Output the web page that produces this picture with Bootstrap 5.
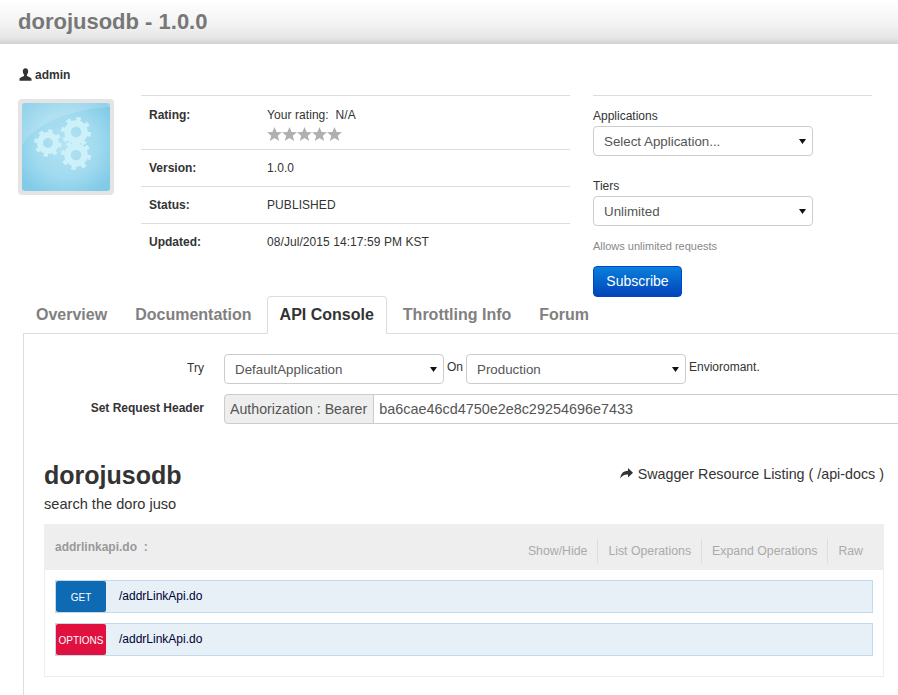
<!DOCTYPE html>
<html lang="en">
<head>
<meta charset="utf-8">
<title>dorojusodb - 1.0.0</title>
<link href="https://cdn.jsdelivr.net/npm/bootstrap@5.3.0/dist/css/bootstrap.min.css" rel="stylesheet">
<style>
html,body{overflow-x:hidden;}
body{font-family:"Liberation Sans",Arial,sans-serif;font-size:12px;color:#333;background:#fff;height:695px;overflow:hidden;}
.top-head{height:44px;background:linear-gradient(#fff 0%,#f3f3f3 55%,#e6e6e6 85%,#d2d2d2 100%);padding-left:18px;}
.top-head h1{font-size:22px;font-weight:700;color:#777;line-height:44px;margin:0;}
.owner{padding:24px 0 0 19px;height:51px;font-weight:700;color:#333;gap:3px;line-height:14px;}
.summary{padding-left:18px;height:201px;}
.thumb-box{width:96px;height:96px;margin-top:4px;background:#e4e4e4;border-radius:4px;padding:4px;flex:none;}
.thumb-box svg{display:block;border-radius:3px;}
.meta-col{width:429px;margin-left:27px;flex:none;}
.meta-tbl{border-top:1px solid #ddd;width:100%;border-collapse:collapse;}
.meta-tbl th,.meta-tbl td{padding:0 8px;vertical-align:top;font-size:12px;}
.meta-tbl tr{border-bottom:1px solid #ddd;}
.meta-tbl tr:last-child{border-bottom:0;}
.meta-tbl th{width:118px;font-weight:700;color:#333;}
.meta-tbl td{color:#333;letter-spacing:.07px;}
.r-a{height:54px;padding-top:12px!important;line-height:14px;}
.r-b{height:37px;padding-top:11px!important;line-height:14px;}
.stars{display:block;margin-top:5px;}
.sub-col{width:279px;margin-left:23px;flex:none;border-top:1px solid #ddd;}
.lbl{font-size:12px;color:#333;line-height:14px;margin:0 0 3px;}
.lbl-first{margin-top:13px;}
.lbl-next{margin-top:23px;}
.arrow-sel{font-family:"Liberation Sans",Arial,sans-serif;font-size:13.33px;color:#555;width:220px;height:30px;padding:1px 24px 0 10px;border:1px solid #ccc;border-radius:4px;line-height:27px;background-size:7px 5px;background-position:right 6px center;background-repeat:no-repeat;background-image:url("data:image/svg+xml,%3Csvg xmlns='http://www.w3.org/2000/svg' viewBox='0 0 8 6' preserveAspectRatio='none'%3E%3Cpath d='M0 0h8L4 6z' fill='%23111'/%3E%3C/svg%3E");}
.hint{font-size:11px;color:#888;line-height:14px;margin:13px 0 0;}
.sub-btn{width:89px;height:31px;margin-top:13px;padding:0;font-size:14px;line-height:29px;color:#fff;border:1px solid #04c;border-radius:4px;background:linear-gradient(#0a80dc,#0044b8);display:block;}
.tabs-wrap .nav-link{font-size:16px;font-weight:700;color:#808080;padding:8px 12px 0;height:37px;line-height:20px;margin:0;border:1px solid transparent;}
.tabs-wrap .nav-item{margin-right:2px;}
.tabs-wrap .nav-link.active{color:#333;border-color:#ddd #ddd #fff;height:38px;border-radius:4px 4px 0 0;margin-right:1px;}
.tabs-line{border-bottom:1px solid #ddd;height:38px;margin-left:23px;}
.pane{margin-left:23px;border-left:1px solid #ddd;padding:20px 0 0 0;height:361px;overflow:hidden;}
.form-line{gap:0;margin-bottom:10px;height:30px;}
.form-lbl{width:180px;text-align:right;flex:none;margin-right:20px;line-height:28px;color:#333;}
.mini{padding:0 3px;line-height:26px;color:#333;flex:none;}
.hdr-group{width:760px;flex:none;flex-wrap:nowrap;height:30px;}
.hdr-group .input-group-text{font-size:14.2px;color:#555;background:#eee;border-color:#ccc;padding:1px 6px 0 5px;height:30px;border-radius:4px 0 0 4px;}
.hdr-group .form-control{font-size:14.4px;color:#555;height:30px;padding:0 5px;border-color:#ccc;border-radius:0;}
.api-wrap{padding:0 0 0 20px;width:860px;}
.api-title{font-size:25px;font-weight:700;color:#333;line-height:30px;margin:0;}
.api-top{margin-top:36px;height:30px;}
.listing{font-size:14.3px;color:#333;line-height:20px;gap:5px;margin-bottom:3px;}
.api-desc{font-size:14.6px;color:#333;line-height:18px;margin:5px 0 11px;}
.res-box{border:1px solid #eee;height:153px;}
.res-head{background:#eee;height:46px;margin:-1px -1px 0;padding:0 11px;}
.res-name{font-weight:700;color:#999;font-size:12px;}
.res-links{gap:0;color:#aaa;font-size:12.3px;align-self:flex-end;margin-bottom:7px;}
.res-links span{padding:0 10px;line-height:24px;border-left:1px solid #ddd;}
.res-links span:first-child{border-left:0;}
.op{height:33px;margin:0 10px 10px;border:1px solid #c3d9ec;background:#e7f0f7;}
.res-ops{padding-top:10px;}
.verb{width:50px;height:31px;color:#fff;font-size:10px;text-align:center;line-height:33px;border-radius:2px;flex:none;}
.verb-get{background:#0f6ab4;}
.verb-opt{background:#e0103f;}
.op-path{padding-left:13px;color:#000033;font-size:12px;line-height:31px;}
</style>
</head>
<body>
<header class="top-head"><h1>dorojusodb - 1.0.0</h1></header>

<div class="owner d-flex align-items-start">
  <svg width="13" height="13" viewBox="0 0 13 13"><path d="M6.5 0.3C4.7 0.3 3.7 1.7 3.8 3.6c0.1 1.3 0.7 2.6 1.3 3.2v1.1C3.6 8.700 0.700 9.300 0.500 10.800V12.700H12.500V10.800C12.300 9.300 9.400 8.700 7.900 7.900V6.800c.6-.6 1.200-1.900 1.300-3.200C9.300 1.700 8.300 0.300 6.500 0.300z" fill="#333"/></svg>
  <span>admin</span>
</div>

<div class="summary d-flex align-items-start">
  <div class="thumb-box">
    <svg width="88" height="88" viewBox="0 0 88 88">
      <defs>
        <radialGradient id="tg" cx="50%" cy="48%" r="62%"><stop offset="0" stop-color="#b4e2f2"/><stop offset=".6" stop-color="#a0daef"/><stop offset="1" stop-color="#82cbe7"/></radialGradient>
      </defs>
      <rect width="88" height="88" fill="url(#tg)"/>
      <path d="M0 42C14 20 50 6 88 4V0H0z" fill="#fff" opacity=".16"/>
      <g fill="none" stroke="#ccf1f9">
        <circle cx="26" cy="40" r="8" stroke-width="6"/>
        <circle cx="26" cy="40" r="12" stroke-width="3.500" stroke-dasharray="4.200 5.200"/>
        <circle cx="54" cy="29" r="8.500" stroke-width="6.500"/>
        <circle cx="54" cy="29" r="13" stroke-width="4" stroke-dasharray="4.400 5.800"/>
        <circle cx="54" cy="52" r="8.500" stroke-width="6.500"/>
        <circle cx="54" cy="52" r="13" stroke-width="4" stroke-dasharray="4.400 5.800"/>
      </g>
    </svg>
  </div>
  <div class="meta-col">
    <table class="meta-tbl">
      <tr><th class="r-a">Rating:</th><td class="r-a">Your rating:&nbsp; N/A
        <svg class="stars" width="75" height="14" viewBox="0 0 75 14" fill="#b0b0b0">
          <polygon points="7.500,0 9.600,5 15,5.300 10.800,8.700 12.200,14 7.500,11.100 2.800,14 4.200,8.700 0,5.300 5.400,5"/>
          <polygon transform="translate(15)" points="7.500,0 9.600,5 15,5.300 10.800,8.700 12.200,14 7.500,11.100 2.800,14 4.200,8.700 0,5.300 5.400,5"/>
          <polygon transform="translate(30)" points="7.500,0 9.600,5 15,5.300 10.800,8.700 12.200,14 7.500,11.100 2.800,14 4.200,8.700 0,5.300 5.400,5"/>
          <polygon transform="translate(45)" points="7.500,0 9.600,5 15,5.300 10.800,8.700 12.200,14 7.500,11.100 2.800,14 4.200,8.700 0,5.300 5.400,5"/>
          <polygon transform="translate(60)" points="7.500,0 9.600,5 15,5.300 10.800,8.700 12.200,14 7.500,11.100 2.800,14 4.200,8.700 0,5.300 5.400,5"/>
        </svg></td></tr>
      <tr><th class="r-b">Version:</th><td class="r-b">1.0.0</td></tr>
      <tr><th class="r-b">Status:</th><td class="r-b">PUBLISHED</td></tr>
      <tr><th class="r-b">Updated:</th><td class="r-b">08/Jul/2015 14:17:59 PM KST</td></tr>
    </table>
  </div>
  <div class="sub-col">
    <p class="lbl lbl-first">Applications</p>
    <select class="form-select arrow-sel d-block"><option>Select Application...</option></select>
    <p class="lbl lbl-next">Tiers</p>
    <select class="form-select arrow-sel d-block"><option>Unlimited</option></select>
    <p class="hint">Allows unlimited requests</p>
    <button type="button" class="btn sub-btn">Subscribe</button>
  </div>
</div>

<div class="tabs-line">
  <ul class="nav tabs-wrap">
    <li class="nav-item"><a class="nav-link" href="#">Overview</a></li>
    <li class="nav-item"><a class="nav-link" href="#">Documentation</a></li>
    <li class="nav-item"><a class="nav-link active" href="#">API Console</a></li>
    <li class="nav-item"><a class="nav-link" href="#">Throttling Info</a></li>
    <li class="nav-item"><a class="nav-link" href="#">Forum</a></li>
  </ul>
</div>

<div class="pane">
  <div class="form-line d-flex align-items-start">
    <div class="form-lbl">Try</div>
    <select class="form-select arrow-sel"><option>DefaultApplication</option></select>
    <span class="mini">On</span>
    <select class="form-select arrow-sel"><option>Production</option></select>
    <span class="mini">Envioromant.</span>
  </div>
  <div class="form-line d-flex align-items-start">
    <div class="form-lbl fw-bold">Set Request Header</div>
    <div class="input-group hdr-group">
      <span class="input-group-text">Authorization : Bearer</span>
      <input type="text" class="form-control" value="ba6cae46cd4750e2e8c29254696e7433">
    </div>
  </div>
  <div class="api-wrap">
    <div class="api-top d-flex justify-content-between align-items-center">
      <h2 class="api-title">dorojusodb</h2>
      <div class="listing d-flex align-items-center">
        <svg width="13" height="11" viewBox="0 0 13 11"><path d="M8 0L13 4.700 8 9.400V6.500C4.500 6.300 2 7.500 0.300 10.500 0.600 6 3 2.900 8 2.700z" fill="#333"/></svg>
        <span>Swagger Resource Listing ( /api-docs )</span>
      </div>
    </div>
    <p class="api-desc">search the doro juso</p>
    <div class="res-box">
      <div class="res-head d-flex justify-content-between align-items-center">
        <span class="res-name">addrlinkapi.do &nbsp;:</span>
        <div class="res-links d-flex">
          <span>Show/Hide</span><span>List Operations</span><span>Expand Operations</span><span>Raw</span>
        </div>
      </div>
      <div class="res-ops">
        <div class="op d-flex"><span class="verb verb-get">GET</span><span class="op-path">/addrLinkApi.do</span></div>
        <div class="op d-flex"><span class="verb verb-opt">OPTIONS</span><span class="op-path">/addrLinkApi.do</span></div>
      </div>
    </div>
  </div>
</div>
<script src="https://cdn.jsdelivr.net/npm/bootstrap@5.3.0/dist/js/bootstrap.bundle.min.js"></script>
</body>
</html>
